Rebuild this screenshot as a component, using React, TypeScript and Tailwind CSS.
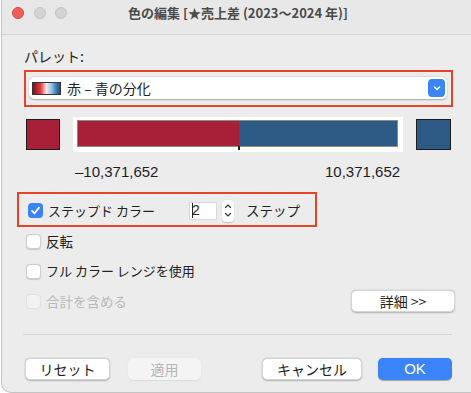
const jp = { fontFamily: '"Noto Sans CJK JP", "Liberation Sans", sans-serif' }
const num = { fontFamily: '"Liberation Sans", "Noto Sans CJK JP", sans-serif' }

function Check({ checked = false, disabled = false }: any) {
    if (checked) {
        return (
            <div className="w-[15px] h-[15px] rounded-[4px] bg-[#3a84f6] flex items-center justify-center shrink-0">
                <svg width="11" height="11" viewBox="0 0 11 11">
                    <path d="M2 5.8 L4.5 8.3 L9 2.6" stroke="white" strokeWidth="1.8" fill="none" strokeLinecap="round" strokeLinejoin="round" />
                </svg>
            </div>
        )
    }
    return (
        <div
            className={
                disabled
                    ? "w-[15px] h-[15px] rounded-[4px] bg-[#f2f2f2] border border-[#e0e0e0] shrink-0"
                    : "w-[15px] h-[15px] rounded-[4px] bg-white border border-[#cdcdcd] shadow-[0_0.5px_1px_rgba(0,0,0,0.15)] shrink-0"
            }
        />
    )
}

function Btn({ children, w, primary = false, disabled = false }: any) {
    let cls = "h-[22px] rounded-[5px] flex items-center justify-center text-[14px] "
    if (primary) cls += "bg-[#3b84f7] text-white shadow-[0_0.5px_1px_rgba(0,0,0,0.3)]"
    else if (disabled) cls += "bg-[#f4f4f4] text-[#b5b5b5] shadow-[0_0.5px_1px_rgba(0,0,0,0.08)]"
    else cls += "bg-white text-[#222] border-[0.5px] border-[#d4d4d4] shadow-[0_0.5px_1.5px_rgba(0,0,0,0.25)]"
    return (
        <div className={cls} style={{ ...jp, width: w }}>
            {children}
        </div>
    )
}

export default function App() {
    return (
        <div className="w-[471px] h-[393px] overflow-hidden bg-white">
            <div className="w-[480px] h-[393px] ml-[1px] border-l border-b border-[#c4c4c4] rounded-bl-[10px] bg-[#ececec] flex flex-col text-[#222]">
                {/* title bar */}
                <div className="h-[35px] bg-[#e8e8e8] border-b border-[#d5d5d5] relative">
                    <div className="flex items-center gap-[9.5px] pl-[10px] h-[26px]">
                        <div className="w-[12px] h-[12px] rounded-full bg-[#ee5f57] border-[0.5px] border-[#d9473f]" />
                        <div className="w-[12px] h-[12px] rounded-full bg-[#d3d3d3] border-[0.5px] border-[#c2c2c2]" />
                        <div className="w-[12px] h-[12px] rounded-full bg-[#d3d3d3] border-[0.5px] border-[#c2c2c2]" />
                    </div>
                    <div className="absolute top-0 left-0 w-[472px] h-[26px] flex items-center justify-center">
                        <span className="text-[13px] font-bold text-[#4b4b4b] whitespace-nowrap" style={jp}>
                            色の編集 [★売上差 (2023～2024 年)]
                        </span>
                    </div>
                </div>

                {/* palette */}
                <div className="mt-[13px] ml-[22px] h-[16px] flex items-center text-[14px]" style={jp}>
                    パレット:
                </div>
                <div className="mt-[6px] ml-[22px] w-[429px] h-[37px] border-2 border-[#e5432a] pt-[5px] pl-[3px]">
                    <div className="w-[418px] h-[22px] bg-white rounded-[5px] shadow-[0_0.5px_1.5px_rgba(0,0,0,0.3)] flex items-center pl-[3px] pr-[2px]">
                        <div className="w-[29px] h-[13px] border border-[#333] bg-[linear-gradient(to_right,#7a1224,#e23a40_28%,#f6eaea_50%,#9cc3e3_68%,#3f7fb7_85%,#244f7c)]" />
                        <span className="ml-[6px] text-[14px]" style={jp}>赤 – 青の分化</span>
                        <div className="ml-auto w-[17px] h-[18px] rounded-[4px] bg-[#3b86f7] flex items-center justify-center">
                            <svg width="10" height="10" viewBox="0 0 10 10">
                                <path d="M2.5 4 L5 6.5 L7.5 4" stroke="white" strokeWidth="1.6" fill="none" strokeLinecap="round" strokeLinejoin="round" />
                            </svg>
                        </div>
                    </div>
                </div>

                {/* color bar */}
                <div className="mt-[10px] h-[35px] flex items-center">
                    <div className="ml-[24px] w-[34px] h-[31px] bg-[#a81f38] border border-[#1d1d1d]" />
                    <div className="ml-[13px] w-[330px] h-[35px] bg-white pt-[3px] pl-[4px] relative">
                        <div className="w-[321px] h-[27px] border border-[#8f8c7e] flex">
                            <div className="w-[161px] h-full bg-[#a81f38]" />
                            <div className="flex-1 h-full bg-[#2e5a86]" />
                        </div>
                        <div className="absolute left-[165px] top-[29px] w-[1.5px] h-[4px] bg-[#222]" />
                    </div>
                    <div className="ml-[13px] w-[35px] h-[31px] bg-[#2e5a86] border border-[#1d1d1d]" />
                </div>

                {/* range numbers */}
                <div className="mt-[12px] h-[16px] flex items-center text-[15px] text-[#1e1e1e] whitespace-nowrap" style={num}>
                    <span className="ml-[73px] w-[84px] shrink-0">–10,371,652</span>
                    <span className="ml-[166px]">10,371,652</span>
                </div>

                {/* stepped */}
                <div className="mt-[12px] ml-[15px] w-[300px] h-[35px] border-2 border-[#e5432a] flex items-center pl-[9px] pt-[2px]">
                    <Check checked />
                    <span className="ml-[5px] w-[141px] text-[13px]" style={jp}>ステップド カラー</span>
                    <div className="w-[28px] h-[18px] bg-white border-[0.5px] border-[#d9d9d9] flex items-center pl-[2px] text-[14px]" style={num}>
                        <span className="w-[1px] h-[15px] bg-[#222]" />
                        <span className="-ml-[1px]">2</span>
                    </div>
                    <div className="ml-[5px] w-[12px] h-[22px] bg-white rounded-[4px] shadow-[0_0.5px_1px_rgba(0,0,0,0.2)] flex flex-col items-center justify-center gap-[3px]">
                        <svg width="8" height="6" viewBox="0 0 8 6">
                            <path d="M1.5 4.5 L4 2 L6.5 4.5" stroke="#333" strokeWidth="1.2" fill="none" strokeLinecap="round" />
                        </svg>
                        <svg width="8" height="6" viewBox="0 0 8 6">
                            <path d="M1.5 1.5 L4 4 L6.5 1.5" stroke="#333" strokeWidth="1.2" fill="none" strokeLinecap="round" />
                        </svg>
                    </div>
                    <span className="ml-[12px] text-[13.5px]" style={jp}>ステップ</span>
                </div>

                {/* options */}
                <div className="mt-[6px] ml-[24px] h-[16px] flex items-center">
                    <Check />
                    <span className="ml-[5px] text-[13.5px]" style={jp}>反転</span>
                </div>
                <div className="mt-[14px] ml-[24px] h-[16px] flex items-center">
                    <Check />
                    <span className="ml-[5px] text-[13px]" style={jp}>フル カラー レンジを使用</span>
                </div>
                <div className="mt-[11px] ml-[24px] h-[22px] flex items-center">
                    <Check disabled />
                    <span className="ml-[5px] text-[13.5px] text-[#b9b9b9]" style={jp}>合計を含める</span>
                    <div className="ml-auto mr-[26px]">
                        <Btn w={104}>詳細 &gt;&gt;</Btn>
                    </div>
                </div>

                <div className="mt-[22px] ml-[21px] w-[429px] h-[1px] bg-[#d6d6d6]" />

                {/* bottom buttons */}
                <div className="mt-[23px] ml-[23px] flex items-center">
                    <Btn w={85}>リセット</Btn>
                    <div className="ml-[18px]">
                        <Btn w={73} disabled>適用</Btn>
                    </div>
                    <div className="ml-[61px]">
                        <Btn w={100}>キャンセル</Btn>
                    </div>
                    <div className="ml-[16px]">
                        <Btn w={74} primary>
                            <span style={num} className="text-[15px]">OK</span>
                        </Btn>
                    </div>
                </div>
            </div>
        </div>
    )
}
